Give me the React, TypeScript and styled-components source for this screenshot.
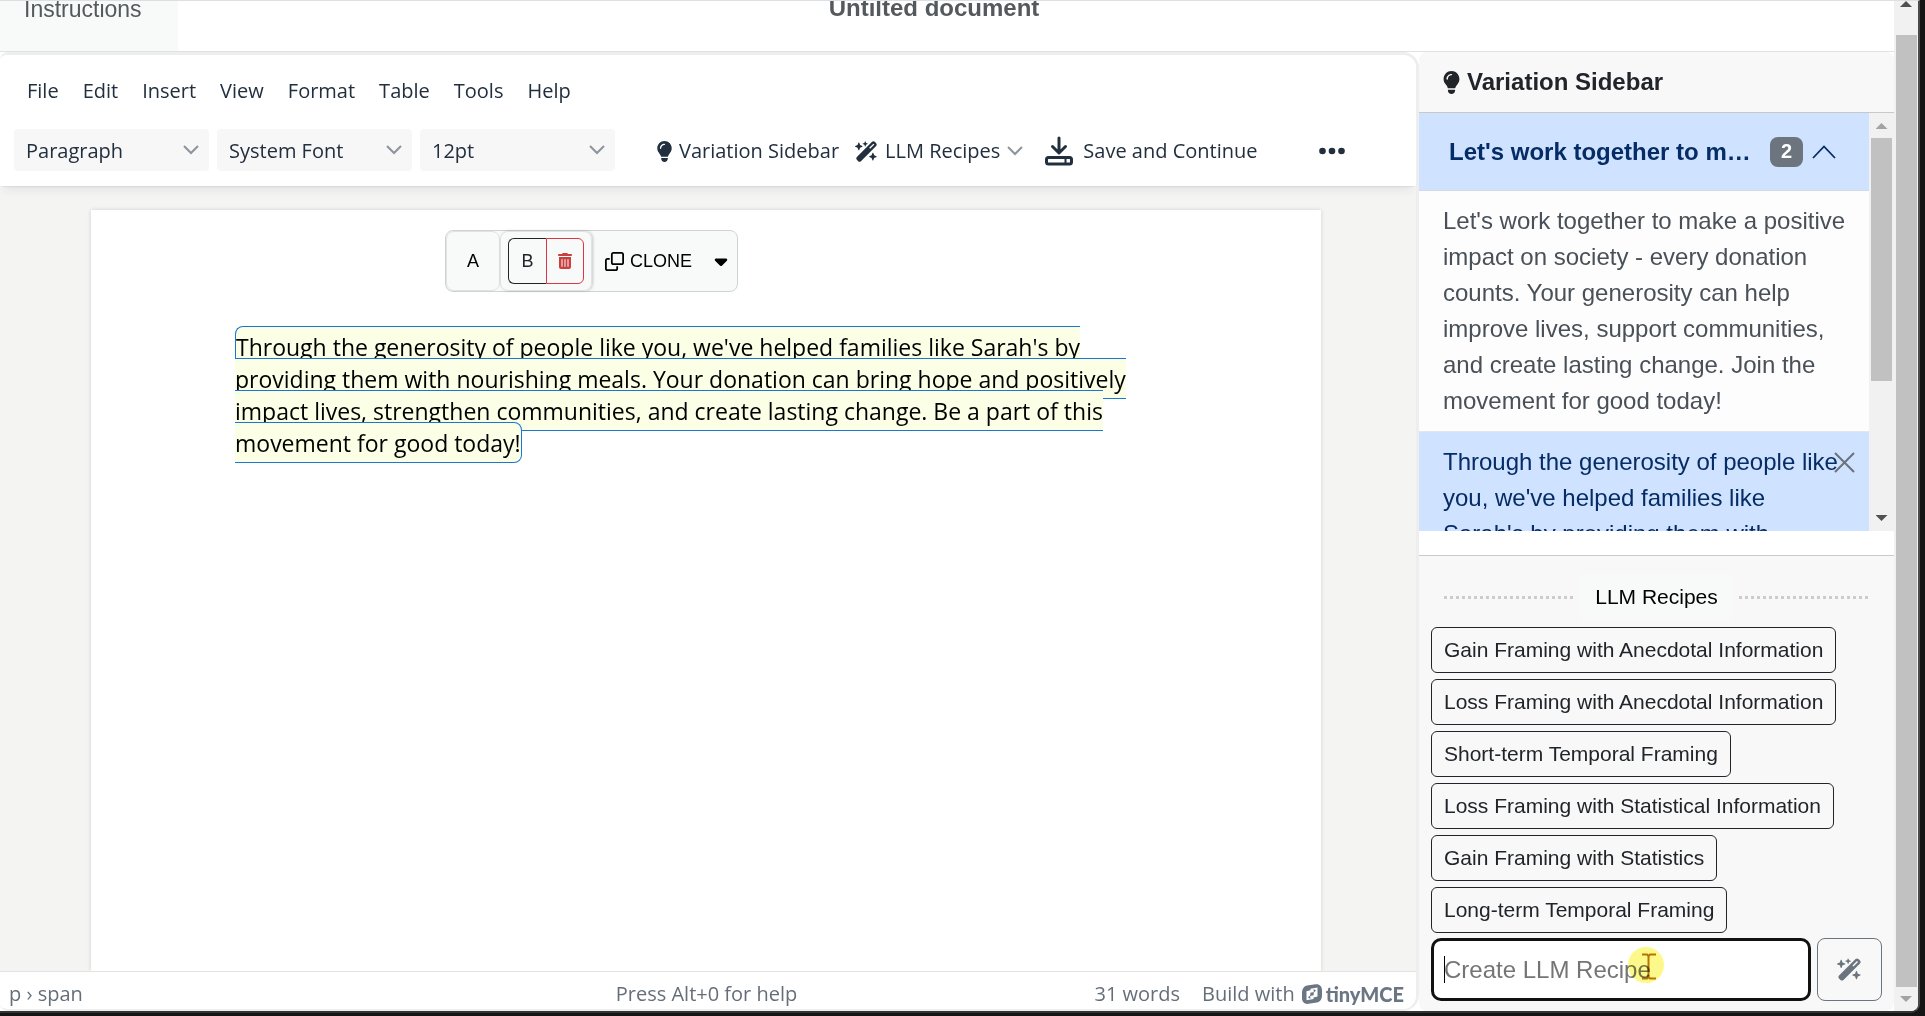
import React, { useState } from "react";
import styled, { createGlobalStyle } from "styled-components";
import {
  FaLightbulb,
  FaWandMagicSparkles,
  FaRegClone,
  FaTrashCan,
  FaCaretDown,
} from "react-icons/fa6";

const sans = `"Liberation Sans", Arial, sans-serif`;
const ui = `"Open Sans", "Noto Sans", sans-serif`;

const Global = createGlobalStyle`
  *, *::before, *::after { box-sizing: border-box; }
  body { margin: 0; background: #111; font-family: ${sans}; color: #212529; overflow: hidden; }
  button, input, select { font: inherit; color: inherit; }
  button { cursor: pointer; background: none; border: 0; padding: 0; }
  p, h1, h2, ul { margin: 0; padding: 0; }
  ul { list-style: none; }
`;

const Desktop = styled.div`
  height: 100vh;
  padding: 0 5px 3px 0;
  background: #151515;
`;

const Window = styled.div`
  height: 100%;
  display: flex;
  background: #f1f1f1;
  border-top: 1px solid #dcdfe3;
  border-right: 2px solid #4a4a4a;
  border-bottom: 2px solid #333535;
  border-radius: 0 0 9px 0;
  overflow: hidden;
`;

const Page = styled.div`
  flex: 1;
  min-width: 0;
  display: flex;
  flex-direction: column;
  background: #fff;
`;

const Header = styled.header`
  height: 51px;
  flex: none;
  display: grid;
  grid-template-columns: 178px 1fr 204px;
  border-bottom: 1px solid #dee2e6;
  overflow: hidden;
`;

const Tab = styled.a`
  display: block;
  margin-top: -6px;
  padding-left: 24px;
  background: #f8faf9;
  color: #54595e;
  font-size: 23px;
  line-height: 28px;
  text-decoration: none;
`;

const DocTitle = styled.h1`
  margin-top: -8px;
  text-align: center;
  font-size: 24px;
  line-height: 30px;
  color: #54595e;
`;

const Main = styled.main`
  flex: 1;
  min-height: 0;
  display: flex;
`;

const Editor = styled.section`
  flex: 1;
  min-width: 0;
  display: flex;
  flex-direction: column;
  border: 3px solid #eee;
  border-left-width: 0;
  border-bottom-width: 2px;
  border-radius: 8px 16px 16px 8px;
  overflow: hidden;
  font-family: ${ui};
  color: #222f3e;
`;

const EditorHead = styled.div`
  position: relative;
  z-index: 1;
  flex: none;
  padding: 15px 14px 15px;
  background: #fff;
  box-shadow: 0 2px 2px -2px rgba(34, 47, 62, 0.2), 0 8px 8px -4px rgba(34, 47, 62, 0.08);
`;

const MenuBar = styled.nav`
  display: flex;
  height: 42px;
  align-items: center;
  gap: 24px;
  padding-left: 13px;
  margin-bottom: 17px;
  font-size: 20px;
  line-height: 28px;
`;

const Tools = styled.div`
  display: flex;
  align-items: center;
  height: 42px;
  font-size: 20px;
  line-height: 28px;
`;

const SelectBox = styled.label`
  display: grid;
  align-items: center;
  width: 195px;
  height: 42px;
  margin-right: 8px;
  background: #f7f7f7;
  border-radius: 4px;
  > * { grid-area: 1 / 1; }
  > svg { justify-self: end; margin-right: 10px; pointer-events: none; }
`;

const Select = styled.select`
  appearance: none;
  width: 100%;
  height: 100%;
  border: 0;
  padding: 2px 36px 0 12px;
  background: transparent;
`;

const ToolButton = styled.button<{ $gap?: number; $left?: number }>`
  display: flex;
  align-items: center;
  gap: ${(p) => p.$gap ?? 7}px;
  margin-left: ${(p) => p.$left ?? 16}px;
  padding-top: 2px;
  white-space: nowrap;
`;

const Canvas = styled.div`
  flex: 1;
  min-height: 0;
  display: flex;
  padding: 24px 95px 0 91px;
  background: #f4f4f3;
`;

const Paper = styled.article`
  flex: 1;
  padding: 20px 144px 0;
  background: #fff;
  box-shadow: 0 0 4px rgba(0, 0, 0, 0.15);
`;

const Variants = styled.div`
  display: flex;
  width: 293px;
  height: 62px;
  margin: 0 auto 39px 210px;
  background: #f8faf9;
  border: 1px solid #ced4d1;
  border-radius: 8px;
  font-family: ${sans};
  font-size: 18px;
  color: #000;
`;

const VariantCell = styled.div<{ $active?: boolean }>`
  display: flex;
  align-items: center;
  justify-content: center;
  width: ${(p) => (p.$active ? 92 : 54)}px;
  padding: ${(p) => (p.$active ? "0 7px" : 0)};
  border: 1px solid #dfe3e1;
  border-radius: 8px;
  box-shadow: ${(p) => (p.$active ? "1px 0 3px rgba(0,0,0,0.2)" : "none")};
`;

const PairButton = styled.button<{ $danger?: boolean }>`
  display: flex;
  align-items: center;
  justify-content: center;
  width: 39px;
  height: 46px;
  color: ${(p) => (p.$danger ? "#c9403f" : "#212529")};
  border: 1px solid ${(p) => (p.$danger ? "#dc3545" : "#212529")};
  border-right-width: ${(p) => (p.$danger ? 1 : 0)}px;
  border-radius: ${(p) => (p.$danger ? "0 6px 6px 0" : "6px 0 0 6px")};
`;

const CloneButton = styled.button`
  display: flex;
  align-items: center;
  gap: 6px;
  padding-left: 13px;
`;

const CaretButton = styled.button`
  display: flex;
  align-items: center;
  padding-left: 19px;
`;

const Copy = styled.p`
  font-size: 23px;
  line-height: 32px;
  color: #000;
  white-space: nowrap;
`;

const Mark = styled.span`
  padding: 4px 0 3px;
  background: #fbffe6;
  border: 1px solid #1976d2;
  border-radius: 8px;
`;

const StatusBar = styled.footer`
  flex: none;
  display: grid;
  grid-template-columns: 1fr auto 1fr;
  align-items: center;
  height: 38px;
  padding: 6px 12px 0 9px;
  background: #fff;
  border-top: 1px solid #e3e3e3;
  font-size: 20px;
  line-height: 26px;
  color: rgba(34, 47, 62, 0.7);
`;

const StatusEnd = styled.div`
  display: flex;
  justify-content: flex-end;
  gap: 22px;
`;

const Brand = styled.a`
  display: flex;
  align-items: center;
  gap: 7px;
  color: inherit;
  text-decoration: none;
`;

const Wordmark = styled.b`
  margin-left: -3px;
  font-family: Lato, sans-serif;
  font-weight: 900;
  font-size: 20px;
  color: #6b7684;
`;

const Sidebar = styled.aside`
  width: 475px;
  flex: none;
  display: flex;
  flex-direction: column;
  background: #fff;
`;

const SidebarTitle = styled.h2`
  flex: none;
  display: flex;
  align-items: center;
  gap: 4px;
  height: 61px;
  padding-left: 21px;
  background: #f8f8f8;
  border-bottom: 1px solid #c8c8c8;
  border-radius: 8px 8px 0 0;
  font-size: 24px;
`;

const ListFrame = styled.div`
  flex: 1;
  min-height: 0;
  display: flex;
  margin-bottom: 24px;
`;

const List = styled.div`
  flex: 1;
  min-width: 0;
  overflow: hidden;
`;

const GroupHead = styled.button`
  display: flex;
  align-items: center;
  width: 100%;
  height: 78px;
  padding: 0 33px 0 30px;
  background: #cfe2ff;
  border-bottom: 1px solid #d3dce6;
  color: #052c65;
  font-weight: 700;
  font-size: 24px;
  text-align: left;
`;

const Ellipsis = styled.span`
  flex: 1;
  min-width: 0;
  margin-right: 14px;
  overflow: hidden;
  white-space: nowrap;
  text-overflow: ellipsis;
`;

const Badge = styled.span`
  display: grid;
  place-items: center;
  width: 33px;
  height: 30px;
  margin-right: 9px;
  border-radius: 8px;
  background: #6c757d;
  color: #fff;
  font-size: 20px;
`;

const Variation = styled.div<{ $active?: boolean }>`
  display: grid;
  grid-template-columns: 1fr;
  padding: 12px 14px 12px 24px;
  font-size: 24px;
  line-height: 36px;
  background: ${(p) => (p.$active ? "#cfe2ff" : "#fdfdfd")};
  color: ${(p) => (p.$active ? "#052c65" : "#495057")};
  border-bottom: 1px solid #e3e6ea;
  > * { grid-area: 1 / 1; }
  > p { white-space: nowrap; }
`;

const Close = styled.button`
  justify-self: end;
  align-self: start;
  height: 36px;
  display: flex;
  align-items: center;
  color: #6a727a;
`;

const Track = styled.div<{ $inner?: boolean }>`
  flex: none;
  width: ${(p) => (p.$inner ? 25 : 24)}px;
  display: flex;
  flex-direction: column;
  align-items: center;
  background: #f1f1f1;
`;

const Arrow = styled.span<{ $down?: boolean; $tone: string }>`
  flex: none;
  width: 12px;
  height: 6px;
  background: ${(p) => p.$tone};
  clip-path: ${(p) => (p.$down ? "polygon(0 0, 100% 0, 50% 100%)" : "polygon(50% 0, 100% 100%, 0 100%)")};
`;

const Thumb = styled.span<{ $grow: number }>`
  flex: ${(p) => p.$grow} 1 0;
  width: 21px;
  background: #c1c1c1;
`;

const Rest = styled.span<{ $grow: number }>`
  flex: ${(p) => p.$grow} 1 0;
`;

const Recipes = styled.section`
  flex: none;
  display: flex;
  flex-direction: column;
  padding: 18px 12px 10px;
  background: #f8f8f8;
  border-top: 1px solid #c8cbce;
  border-radius: 0 0 8px 8px;
`;

const Divider = styled.div`
  display: grid;
  grid-template-columns: 1fr auto 1fr;
  align-items: center;
  padding: 0 13px 0 13px;
  gap: 7px;
  height: 46px;
  margin-bottom: 7px;
`;

const Dots = styled.span`
  height: 3px;
  background: repeating-linear-gradient(90deg, #ccc 0 3px, transparent 3px 6px);
`;

const DividerText = styled.h2`
  padding: 0 14px;
  font-size: 21px;
  line-height: 46px;
  font-weight: 400;
  color: #000;
  background: #f8faf9;
`;

const RecipeList = styled.ul`
  display: flex;
  flex-direction: column;
  align-items: flex-start;
  gap: 6px;
`;

const Recipe = styled.button`
  height: 46px;
  padding: 0 12px;
  border: 1px solid #212529;
  border-radius: 6px;
  font-size: 21px;
  color: #212529;
  display: block;
`;

const Composer = styled.form`
  position: relative;
  display: flex;
  gap: 6px;
  height: 63px;
  margin-top: 5px;
`;

const Prompt = styled.input`
  flex: 1;
  min-width: 0;
  padding: 0 10px;
  border: 3px solid #111;
  border-radius: 10px;
  background: #fff;
  outline: none;
  caret-color: transparent;
  font-size: 24px;
  &::placeholder { color: #757575; opacity: 1; }
`;

const Generate = styled.button`
  display: grid;
  place-items: center;
  width: 65px;
  border: 1px solid #6c757d;
  border-radius: 8px;
  color: #6c757d;
`;

const Caret = styled.span`
  position: absolute;
  left: 13px;
  top: 18px;
  width: 1px;
  height: 27px;
  background: #000;
`;

const Pointer = styled.svg`
  position: absolute;
  left: 197px;
  top: 9px;
  pointer-events: none;
  mix-blend-mode: multiply;
`;

const Chevron = () => (
  <svg width="16" height="10" viewBox="0 0 16 10" fill="none" stroke="#8d949d" strokeWidth="2">
    <path d="M1 1l7 7 7-7" />
  </svg>
);

const SaveIcon = () => (
  <svg width="28" height="30" viewBox="0 0 28 30" fill="none" stroke="#222f3e" strokeWidth="3">
    <path d="M14 2v14M7.500 10.500l6.500 6.500 6.500-6.500" strokeLinejoin="round" strokeLinecap="round" />
    <rect x="1.500" y="21.500" width="25" height="6.500" rx="2" />
    <path d="M20.500 22v6" strokeWidth="2" />
  </svg>
);

const TinyLogo = () => (
  <svg width="20" height="20" viewBox="0 0 20 20">
    <path
      fill="#6b7684"
      d="M5 1.400L13.500.200C17.500-.300 20 2.400 20 6v5.200c0 4-2 6.700-5.200 7.400L6.600 19.800C2.600 20.400 0 17.800 0 14.200V8.600C0 4.700 1.900 2.100 5 1.400z"
    />
    <path fill="#fff" d="M4.500 7.200L8.500 6.300V4.800L15.500 3.600V12.500L11.500 13.400V15L4.500 16.200z" />
    <path fill="#6b7684" d="M8.300 8.800l3.400-.700v3.200l-3.400.7zM11.700 4.900l2.300 1.700-2.300 2.100zM8.300 15l-2.300-1.700 2.300-2.100z" />
  </svg>
);

const menus = ["File", "Edit", "Insert", "View", "Format", "Table", "Tools", "Help"];
const recipes = [
  "Gain Framing with Anecdotal Information",
  "Loss Framing with Anecdotal Information",
  "Short-term Temporal Framing",
  "Loss Framing with Statistical Information",
  "Gain Framing with Statistics",
  "Long-term Temporal Framing",
];

const Lines = ({ text }: { text: string[] }) => (
  <>
    {text.map((line, i) => (
      <React.Fragment key={i}>
        {i > 0 && <br />}
        {line}
      </React.Fragment>
    ))}
  </>
);

const Picker = ({ name, value }: { name: string; value: string }) => (
  <SelectBox>
    <Select aria-label={name} defaultValue={value}>
      <option>{value}</option>
    </Select>
    <Chevron />
  </SelectBox>
);

export default function App() {
  const [prompt, setPrompt] = useState("");
  return (
    <>
      <Global />
      <Desktop>
        <Window>
          <Page>
            <Header>
              <Tab href="#instructions">Instructions</Tab>
              <DocTitle>Untilted document</DocTitle>
            </Header>
            <Main>
              <Editor>
                <EditorHead>
                  <MenuBar>
                    {menus.map((m) => (
                      <button key={m}>{m}</button>
                    ))}
                  </MenuBar>
                  <Tools>
                    <Picker name="Block format" value="Paragraph" />
                    <Picker name="Font family" value="System Font" />
                    <Picker name="Font size" value="12pt" />
                    <ToolButton $left={31} $gap={4}>
                      <FaLightbulb size={21} />
                      Variation Sidebar
                    </ToolButton>
                    <ToolButton>
                      <FaWandMagicSparkles size={23} />
                      LLM Recipes
                      <Chevron />
                    </ToolButton>
                    <ToolButton $left={22} $gap={10}>
                      <SaveIcon />
                      Save and Continue
                    </ToolButton>
                    <ToolButton $left={62} aria-label="More">
                      <svg width="26" height="8" viewBox="0 0 26 8" fill="#222f3e">
                        <circle cx="3.500" cy="4" r="3.300" />
                        <circle cx="13" cy="4" r="3.300" />
                        <circle cx="22.500" cy="4" r="3.300" />
                      </svg>
                    </ToolButton>
                  </Tools>
                </EditorHead>
                <Canvas>
                  <Paper>
                    <Variants>
                      <VariantCell>
                        <button>A</button>
                      </VariantCell>
                      <VariantCell $active>
                        <PairButton>B</PairButton>
                        <PairButton $danger aria-label="Delete variation">
                          <FaTrashCan size={16} />
                        </PairButton>
                      </VariantCell>
                      <CloneButton>
                        <FaRegClone size={19} />
                        CLONE
                      </CloneButton>
                      <CaretButton aria-label="More clone options">
                        <FaCaretDown size={20} />
                      </CaretButton>
                    </Variants>
                    <Copy>
                      <Mark>
                        <Lines
                          text={[
                            "Through the generosity of people like you, we've helped families like Sarah's by",
                            "providing them with nourishing meals. Your donation can bring hope and positively",
                            "impact lives, strengthen communities, and create lasting change. Be a part of this",
                            "movement for good today!",
                          ]}
                        />
                      </Mark>
                    </Copy>
                  </Paper>
                </Canvas>
                <StatusBar>
                  <span>p › span</span>
                  <span>Press Alt+0 for help</span>
                  <StatusEnd>
                    <span>31 words</span>
                    <Brand href="#tinymce">
                      Build with
                      <TinyLogo />
                      <Wordmark>tinyMCE</Wordmark>
                    </Brand>
                  </StatusEnd>
                </StatusBar>
              </Editor>
              <Sidebar>
                <SidebarTitle>
                  <FaLightbulb size={23} />
                  Variation Sidebar
                </SidebarTitle>
                <ListFrame>
                  <List>
                    <GroupHead>
                      <Ellipsis>Let's work together to make a positive impact</Ellipsis>
                      <Badge>2</Badge>
                      <svg width="24" height="14" viewBox="0 0 24 14" fill="none" stroke="#052c65" strokeWidth="1.800">
                        <path d="M1 13L12 1.500 23 13" />
                      </svg>
                    </GroupHead>
                    <Variation>
                      <p>
                        <Lines
                          text={[
                            "Let's work together to make a positive",
                            "impact on society - every donation",
                            "counts. Your generosity can help",
                            "improve lives, support communities,",
                            "and create lasting change. Join the",
                            "movement for good today!",
                          ]}
                        />
                      </p>
                    </Variation>
                    <Variation $active>
                      <p>
                        <Lines
                          text={[
                            "Through the generosity of people like",
                            "you, we've helped families like",
                            "Sarah's by providing them with",
                          ]}
                        />
                      </p>
                      <Close aria-label="Remove variation">
                        <svg width="21" height="21" viewBox="0 0 21 21" fill="none" stroke="currentColor" strokeWidth="2">
                          <path d="M1 1l19 19M20 1L1 20" />
                        </svg>
                      </Close>
                    </Variation>
                  </List>
                  <Track $inner>
                    <Rest $grow={10} />
                    <Arrow $tone="#a3a3a3" />
                    <Rest $grow={9} />
                    <Thumb $grow={243} />
                    <Rest $grow={134} />
                    <Arrow $down $tone="#505050" />
                    <Rest $grow={10} />
                  </Track>
                </ListFrame>
                <Recipes>
                  <Divider>
                    <Dots />
                    <DividerText>LLM Recipes</DividerText>
                    <Dots />
                  </Divider>
                  <RecipeList>
                    {recipes.map((r) => (
                      <li key={r}>
                        <Recipe>{r}</Recipe>
                      </li>
                    ))}
                  </RecipeList>
                  <Composer onSubmit={(e) => e.preventDefault()}>
                    <Prompt
                      aria-label="Create LLM Recipe"
                      placeholder="Create LLM Recipe"
                      value={prompt}
                      onChange={(e) => setPrompt(e.target.value)}
                    />
                    <Generate aria-label="Generate">
                      <FaWandMagicSparkles size={25} />
                    </Generate>
                    <Caret />
                    <Pointer width="36" height="36" viewBox="0 0 36 36">
                      <circle cx="18" cy="18" r="18" fill="#fcf98a" />
                      <path d="M14 7.500h5l1.500 1.500 1.500-1.500h6M14 31.500h5l1.500-1.500 1.500 1.500h6M20.500 8v23" fill="none" stroke="#b87400" strokeWidth="2" />
                    </Pointer>
                  </Composer>
                </Recipes>
              </Sidebar>
            </Main>
          </Page>
          <Track>
            <Arrow $tone="#505050" />
            <Rest $grow={28} />
            <Thumb $grow={952} />
            <Rest $grow={9} />
            <Arrow $down $tone="#a3a3a3" />
            <Rest $grow={9} />
          </Track>
        </Window>
      </Desktop>
    </>
  );
}
